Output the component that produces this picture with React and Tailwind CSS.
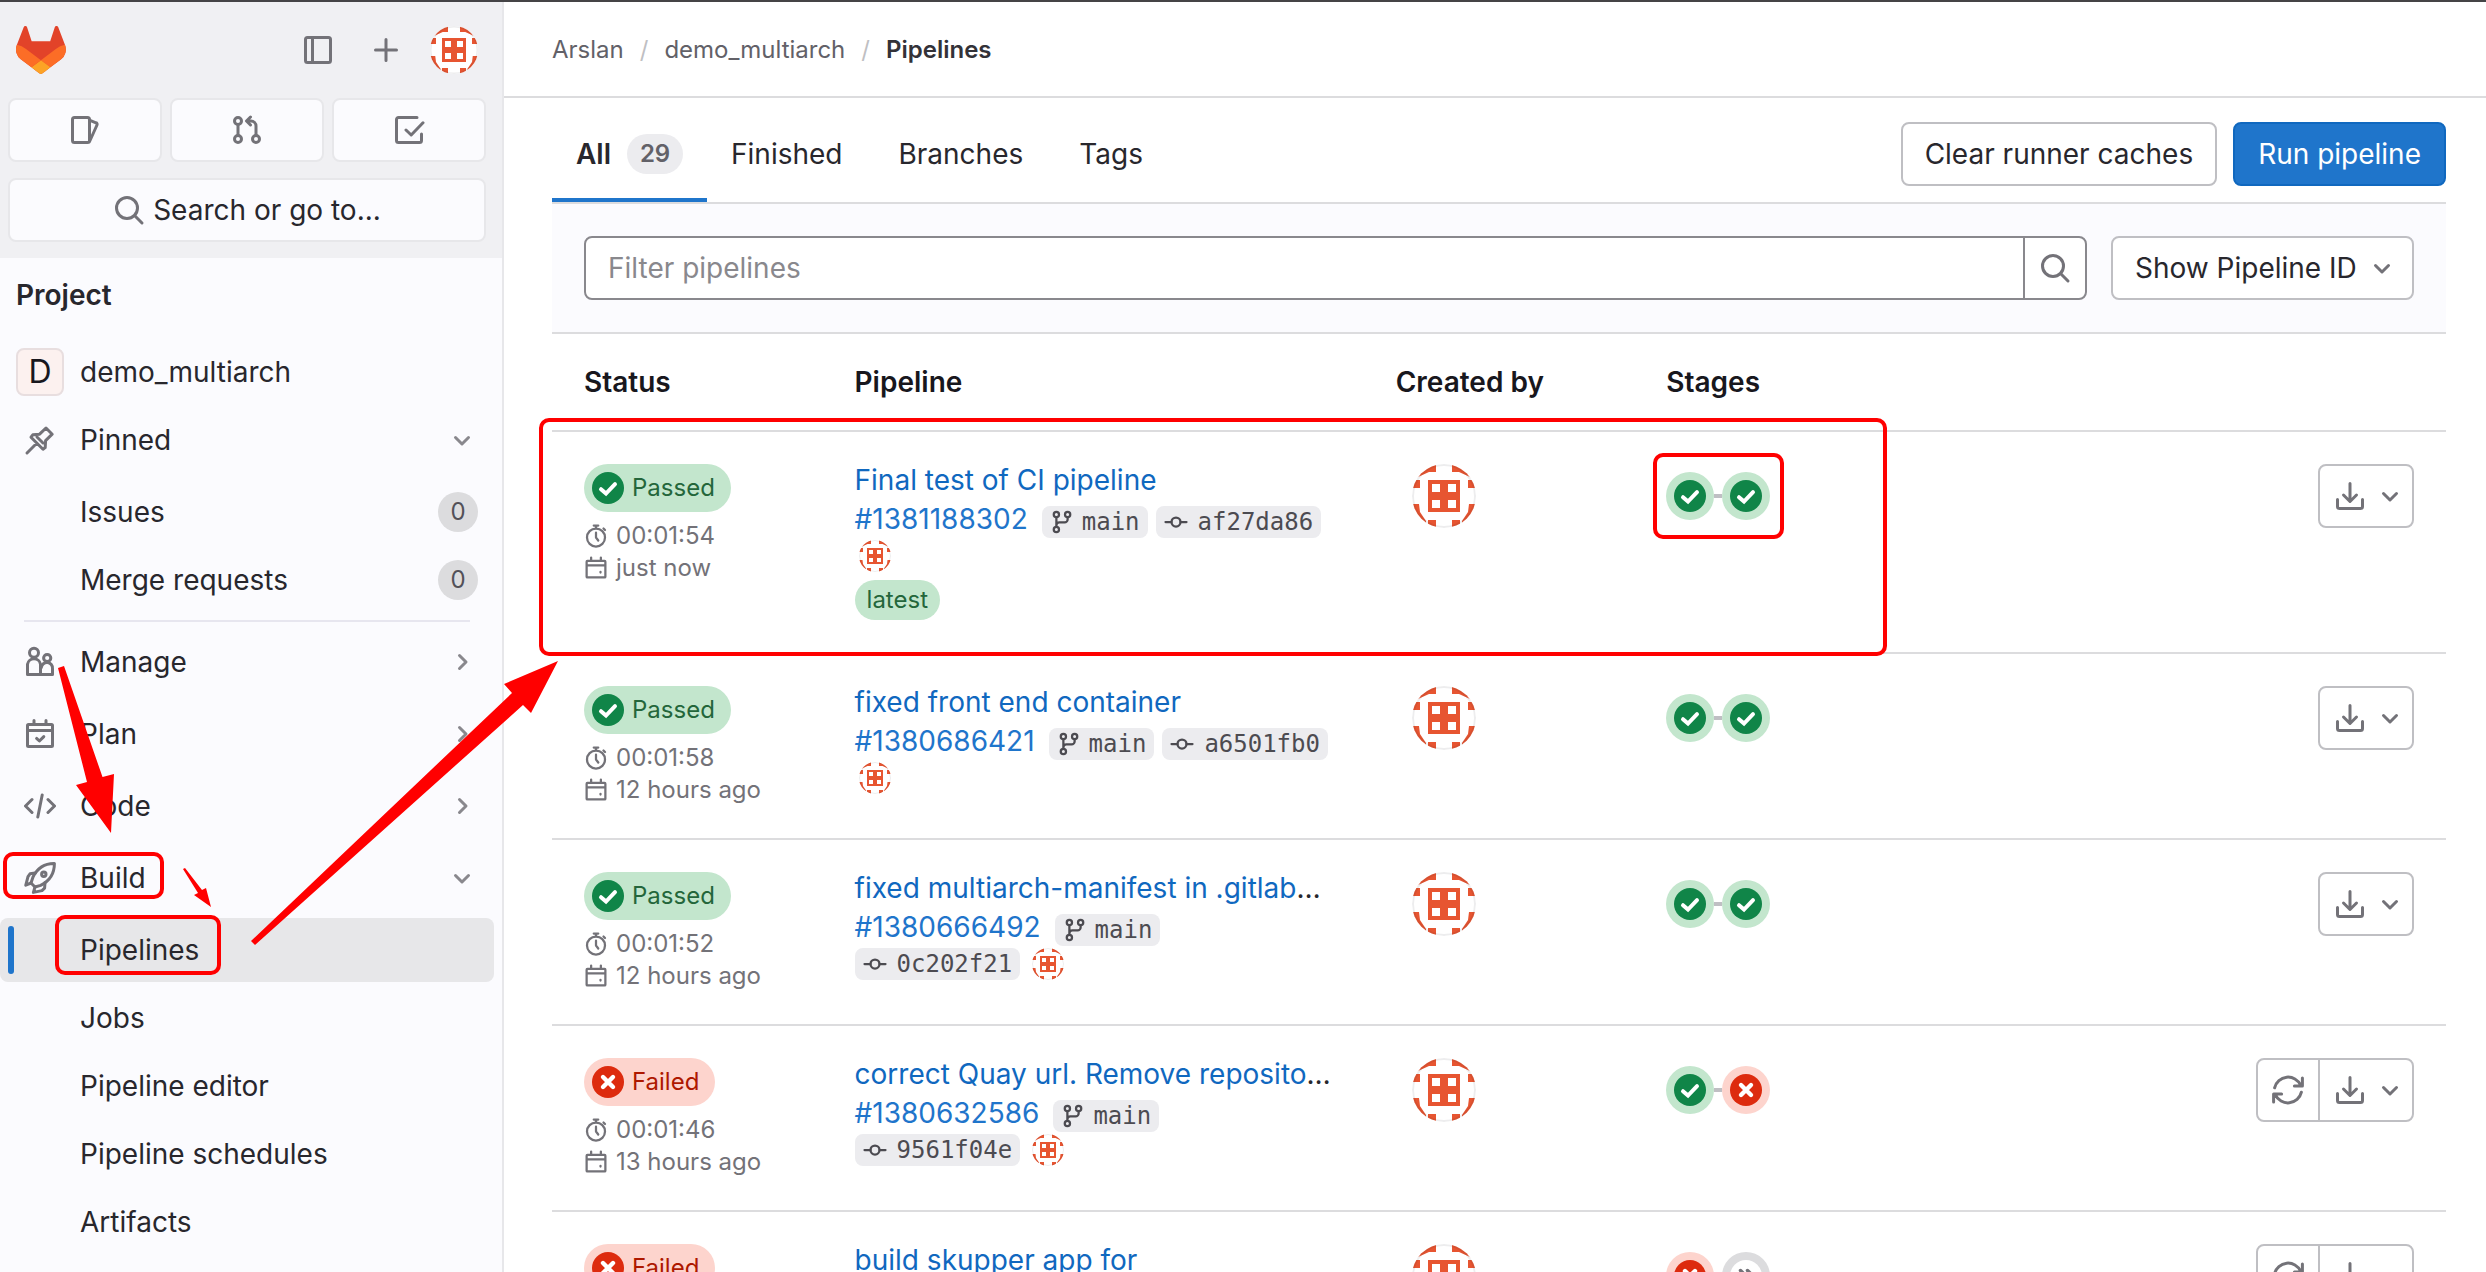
import React, { useState } from 'react';

const Icon = ({ size = 'size-8', children, className = '' }) => (
  <svg
    viewBox="0 0 16 16"
    fill="none"
    stroke="currentColor"
    strokeWidth="1.5"
    strokeLinecap="round"
    strokeLinejoin="round"
    aria-hidden="true"
    className={`shrink-0 ${size} ${className}`}
  >
    {children}
  </svg>
);

const SearchIcon = () => (
  <Icon className="text-[#737278]">
    <circle cx="7" cy="7" r="5.25" />
    <path d="m10.9 10.9 3.6 3.6" />
  </Icon>
);

const ChevronDown = ({ className = 'text-[#737278]' }) => (
  <Icon className={className}>
    <path d="M4.75 6.75 8 10l3.25-3.25" />
  </Icon>
);

const ChevronRight = () => (
  <Icon className="text-[#89888d]">
    <path d="M6.75 4.75 10 8l-3.25 3.25" />
  </Icon>
);

const PinIcon = () => (
  <Icon className="text-[#737278]">
    <path d="m11 2 3.1 3.1-3.3 3.2-.2 3.5-1.1.8-6-6 .9-1.2 3.4-.3L11 2ZM6.5 9.5l-5 5M6.5 6.5l3 3" />
  </Icon>
);

const ManageIcon = () => (
  <Icon className="text-[#737278]">
    <circle cx="5" cy="3.4" r="2.25" />
    <path d="M1.75 14.25V9.1a3.3 3.3 0 0 1 6.5 0v5.15h-6.5Z" />
    <circle cx="11.6" cy="6" r="1.8" />
    <path d="M8.6 14.25h5.65v-2.9a2.7 2.7 0 0 0-5.6-.6" />
  </Icon>
);

const PlanIcon = () => (
  <Icon className="text-[#737278]">
    <path d="M2.25 3.25h11.5a.5.5 0 0 1 .5.5v10a.5.5 0 0 1-.5.5H2.25a.5.5 0 0 1-.5-.5v-10a.5.5 0 0 1 .5-.5ZM2 6.25h12M5 1.25v2M11 1.25v2M6.3 10.2l1.4 1.3 2.2-2.2" />
  </Icon>
);

const CodeIcon = () => (
  <Icon className="text-[#737278]">
    <path d="M4 4.75.75 8 4 11.25M12 4.75 15.25 8 12 11.25M9.1 2.5 6.9 13.5" />
  </Icon>
);

const BuildIcon = () => (
  <Icon className="text-[#737278]">
    <path d="M15.2.8c-4.7-.1-8.3 2-10.7 6.7l-1 3 2 2 2.8-.8C12.7 9.6 15.2 6 15.2.8Z" />
    <path d="M5.6 5.5 3 5.9 2 7.3.9 11.6l2.6-1.1M10.5 10.4l-.2 2.7L9 14.3l-4.3.9.8-2.7" />
    <circle cx="9.9" cy="6.1" r="1.1" />
  </Icon>
);

const ClockIcon = () => (
  <Icon size="size-6">
    <circle cx="8" cy="9" r="6" />
    <path d="M8 5.75V9l1.5 2M8 1v1.5M6.5 1h3M13 3l1 1" />
  </Icon>
);

const CalendarIcon = () => (
  <Icon size="size-6">
    <path d="M2.25 3.25h11.5a.5.5 0 0 1 .5.5v10a.5.5 0 0 1-.5.5H2.25a.5.5 0 0 1-.5-.5v-10a.5.5 0 0 1 .5-.5ZM2 6.25h12M4.75 1v2M11.25 1v2M11 10.5v.5" />
  </Icon>
);

const BranchIcon = () => (
  <Icon size="size-6">
    <circle cx="4.25" cy="3" r="1.75" />
    <circle cx="11.75" cy="3" r="1.75" />
    <circle cx="4.25" cy="13" r="1.75" />
    <path d="M4.25 5v6M11.75 5v1.25a2 2 0 0 1-2 2h-3.5a2 2 0 0 0-2 2" />
  </Icon>
);

const CommitIcon = () => (
  <Icon size="size-6">
    <circle cx="8" cy="8" r="3" />
    <path d="M1 8h4M11 8h4" />
  </Icon>
);

const DownloadIcon = () => (
  <Icon>
    <path d="M1.75 9.75v3.5a1 1 0 0 0 1 1h10.5a1 1 0 0 0 1-1v-3.5M8 1.75v8.75M4.75 7.5 8 10.75l3.25-3.25" />
  </Icon>
);

const RetryIcon = () => (
  <Icon>
    <path d="M1.3 6.9A6.9 6.9 0 0 1 14.3 5.6M15.2 2v4h-4M14.7 9.1A6.9 6.9 0 0 1 1.7 10.4M.8 14v-4h4" />
  </Icon>
);

const Logo = () => (
  <svg viewBox="0 0 25 24" className="h-12 w-[50px]" aria-hidden="true">
    <path d="m24.507 9.5-.034-.09L21.082.562a.896.896 0 0 0-1.694.091l-2.29 7.01H7.825L5.535.653a.898.898 0 0 0-1.694-.09L.451 9.411.416 9.5a6.297 6.297 0 0 0 2.09 7.278l.012.01.03.022 5.16 3.867 2.56 1.935 1.554 1.176a1.051 1.051 0 0 0 1.268 0l1.555-1.176 2.56-1.935 5.197-3.89.014-.01A6.297 6.297 0 0 0 24.507 9.5Z" fill="#E24329" />
    <path d="m24.507 9.5-.034-.09a11.44 11.44 0 0 0-4.56 2.051l-7.447 5.632 4.742 3.584 5.197-3.89.014-.01A6.297 6.297 0 0 0 24.507 9.5Z" fill="#FC6D26" />
    <path d="m7.707 20.677 2.56 1.935 1.555 1.176a1.051 1.051 0 0 0 1.268 0l1.555-1.176 2.56-1.935-4.743-3.584-4.755 3.584Z" fill="#FCA326" />
    <path d="M5.01 11.461a11.43 11.43 0 0 0-4.56-2.05L.416 9.5a6.297 6.297 0 0 0 2.09 7.278l.012.01.03.022 5.16 3.867 4.745-3.584-7.443-5.632Z" fill="#FC6D26" />
  </svg>
);

const Avatar = ({ className = 'size-16' }) => (
  <span className={`block shrink-0 overflow-hidden rounded-full bg-white ${className}`}>
    <svg viewBox="0 0 64 64" className="size-full" role="img" aria-label="Arslan">
      <g fill="#e75531">
        <path d="M0 0h24v8h-7L6 13 0 16ZM64 0H40v8h7l11 5 6 3Z" />
        <path d="M0 16h8v8H0ZM56 16h8v8h-8ZM0 40h7l1 8 6 9v7H0ZM64 40h-7l-1 8-6 9v7h14Z" />
        <path d="M16 56h8v8h-8ZM40 56h8v8h-8Z" />
        <path fillRule="evenodd" d="M16 16h32v32H16ZM20 20v8h8v-8ZM36 20v8h8v-8ZM20 36v8h8v-8ZM36 36v8h8v-8Z" />
      </g>
      <circle cx="32" cy="32" r="31" fill="none" stroke="#1f1e24" strokeOpacity="0.08" strokeWidth="2" />
    </svg>
  </span>
);

const StatusIcon = ({ status }) => {
  if (status === 'passed') {
    return (
      <svg viewBox="0 0 16 16" className="size-8 shrink-0" aria-hidden="true">
        <circle cx="8" cy="8" r="8" fill="#108548" />
        <path d="M4.5 8.6 7 10.8l4.5-4.7" fill="none" stroke="#fff" strokeWidth="2" strokeLinecap="round" />
      </svg>
    );
  }
  if (status === 'failed') {
    return (
      <svg viewBox="0 0 16 16" className="size-8 shrink-0" aria-hidden="true">
        <circle cx="8" cy="8" r="8" fill="#dd2b0e" />
        <path d="m5.5 5.5 5 5M10.5 5.5l-5 5" fill="none" stroke="#fff" strokeWidth="2.2" strokeLinecap="round" />
      </svg>
    );
  }
  return (
    <svg viewBox="0 0 16 16" className="size-8 shrink-0" aria-hidden="true">
      <circle cx="8" cy="8" r="8" fill="#fff" />
      <path d="M5.25 5.25 8 8l-2.75 2.75M8.75 5.25 11.5 8l-2.75 2.75" fill="none" stroke="#737278" strokeWidth="1.75" strokeLinecap="round" strokeLinejoin="round" />
    </svg>
  );
};

const badgeStyles = {
  passed: 'bg-[#c3e6cd] text-[#24663b]',
  failed: 'bg-[#fdd4cd] text-[#ae1800]',
  skipped: 'bg-[#dcdcde] text-[#737278]'
};

const pipelines = [
  {
    status: 'passed', duration: '00:01:54', finished: 'just now',
    title: 'Final test of CI pipeline', id: '#1381188302', branch: 'main', commit: 'af27da86',
    latest: true, stages: ['passed', 'passed']
  },
  {
    status: 'passed', duration: '00:01:58', finished: '12 hours ago',
    title: 'fixed front end container', id: '#1380686421', branch: 'main', commit: 'a6501fb0',
    stages: ['passed', 'passed']
  },
  {
    status: 'passed', duration: '00:01:52', finished: '12 hours ago',
    title: 'fixed multiarch-manifest in .gitlab', cut: true, id: '#1380666492', branch: 'main', commit: '0c202f21',
    stages: ['passed', 'passed']
  },
  {
    status: 'failed', duration: '00:01:46', finished: '13 hours ago',
    title: 'correct Quay url. Remove reposito', cut: true, id: '#1380632586', branch: 'main', commit: '9561f04e',
    stages: ['passed', 'failed'], retry: true
  },
  {
    status: 'failed', title: 'build skupper app for', stages: ['failed', 'skipped'], retry: true
  }
];

const tabs = ['Finished', 'Branches', 'Tags'];
const buildLinks = ['Pipelines', 'Jobs', 'Pipeline editor', 'Pipeline schedules', 'Artifacts'];

const SectionButton = ({ icon, label, open }) => (
  <button type="button" aria-expanded={!!open} className="flex h-16 w-full items-center gap-6 pr-4 pl-6 text-left">
    {icon}
    <span className="grow">{label}</span>
    {open ? <ChevronDown className="text-[#89888d]" /> : <ChevronRight />}
  </button>
);

const Sidebar = () => (
  <aside className="flex w-[504px] shrink-0 flex-col overflow-hidden border-r-2 border-[#e7e7ea] bg-[#fbfbfe]">
    <div className="bg-[#f0f0f3] pr-4 pb-4 pl-2">
      <div className="flex h-24 items-center justify-between pr-2 pl-2">
        <a href="#" aria-label="Homepage"><Logo /></a>
        <div className="flex items-center gap-5 text-[#737278]">
          <button type="button" aria-label="Hide sidebar" className="flex size-12 items-center justify-center">
            <Icon>
              <rect x="1.75" y="1.75" width="12.5" height="12.5" rx="1" />
              <path d="M5.25 2v12" />
            </Icon>
          </button>
          <button type="button" aria-label="Create new" className="flex size-12 items-center justify-center">
            <Icon><path d="M8 2.75v10.5M2.75 8h10.5" /></Icon>
          </button>
          <button type="button" aria-label="User menu"><Avatar className="size-12" /></button>
        </div>
      </div>
      <div className="grid grid-cols-3 gap-2 text-[#737278]">
        <button type="button" aria-label="Issues" className="flex h-16 items-center justify-center rounded-lg border-2 border-[#e7e7ea] bg-[#fbfbfe]">
          <Icon>
            <rect x="1.75" y="1.75" width="8.5" height="12.5" rx="1" />
            <path d="m10.5 3.2 3 1.2a.8.8 0 0 1 .5 1.1l-3.6 8" />
          </Icon>
        </button>
        <button type="button" aria-label="Merge requests" className="flex h-16 items-center justify-center rounded-lg border-2 border-[#e7e7ea] bg-[#fbfbfe]">
          <Icon>
            <circle cx="3.5" cy="3.5" r="1.75" />
            <circle cx="3.5" cy="12.5" r="1.75" />
            <circle cx="12.5" cy="12.5" r="1.75" />
            <path d="M3.5 5.5v5M12.5 10.5V6A2.5 2.5 0 0 0 10 3.5H8.5M9.75 1.5l-2 2 2 2" />
          </Icon>
        </button>
        <button type="button" aria-label="To-Do List" className="flex h-16 items-center justify-center rounded-lg border-2 border-[#e7e7ea] bg-[#fbfbfe]">
          <Icon>
            <path d="M12 1.75H2.75a1 1 0 0 0-1 1v10.5a1 1 0 0 0 1 1h10.5a1 1 0 0 0 1-1V10M6.5 8l2.6 2.5L15 4.4" />
          </Icon>
        </button>
      </div>
      <button type="button" className="mt-4 flex h-16 w-full items-center justify-center gap-2 rounded-lg border-2 border-[#e7e7ea] bg-[#fbfbfe]">
        <SearchIcon />
        Search or go to...
      </button>
    </div>

    <nav aria-label="Project navigation" className="pr-2">
      <h2 className="mb-2 flex h-[74px] items-center pl-4 font-semibold">Project</h2>
      <a href="#" className="mb-1 flex h-16 items-center gap-4 pl-4">
        <span className="flex size-12 items-center justify-center rounded-lg border-2 border-[#e8dedf] bg-[#fcf1ef] text-[32px] text-[#18171d]">D</span>
        demo_multiarch
      </a>
      <SectionButton icon={<PinIcon />} label="Pinned" open />
      <ul className="mt-2 space-y-1">
        {['Issues', 'Merge requests'].map(label => (
          <li key={label}>
            <a href="#" className="flex h-16 items-center justify-between pr-4 pl-20">
              {label}
              <span className="flex size-10 items-center justify-center rounded-full bg-[#dcdcde] text-[24px] text-[#535158]">0</span>
            </a>
          </li>
        ))}
      </ul>
      <hr className="mx-6 my-2 border-t-2 border-[#e7e6ef]" />
      <div className="space-y-2">
        <SectionButton icon={<ManageIcon />} label="Manage" />
        <SectionButton icon={<PlanIcon />} label="Plan" />
        <SectionButton icon={<CodeIcon />} label="Code" />
        <SectionButton icon={<BuildIcon />} label="Build" open />
        <ul className="space-y-1">
          {buildLinks.map((label, index) => (
            <li key={label}>
              <a
                href="#"
                aria-current={index === 0 ? 'page' : undefined}
                className={`relative flex h-16 items-center rounded-lg pl-20 ${index === 0 ? 'bg-[#e7e7e9]' : ''}`}
              >
                {index === 0 && <span className="absolute top-2 bottom-2 left-2 w-1.5 rounded-full bg-[#1f75cb]" />}
                {label}
              </a>
            </li>
          ))}
        </ul>
      </div>
    </nav>
  </aside>
);

const PipelineRow = ({ pipeline }) => (
  <tr className="align-top">
    <td className="border-b-2 border-[#dcdcde] p-8">
      <a href="#" className={`flex h-12 w-fit items-center gap-2 rounded-full pr-4 pl-2 text-[24px] ${badgeStyles[pipeline.status]}`}>
        <StatusIcon status={pipeline.status} />
        {pipeline.status === 'passed' ? 'Passed' : 'Failed'}
      </a>
      {pipeline.duration && (
        <div className="mt-2 text-[24px] leading-8 whitespace-nowrap text-[#737278]">
          <p className="flex items-center gap-2"><ClockIcon />{pipeline.duration}</p>
          <p className="flex items-center gap-2"><CalendarIcon />{pipeline.finished}</p>
        </div>
      )}
    </td>
    <td className="border-b-2 border-[#dcdcde] p-8">
      <p className="mb-1 leading-8 whitespace-nowrap">
        <a href="#" className="text-[#1068bf]">{pipeline.title}</a>
        {pipeline.cut && '…'}
      </p>
      {pipeline.id && (
        <div className="flex flex-wrap items-end gap-x-2 gap-y-0.5">
          <a href="#" className="mr-1.5 leading-[38px] text-[#1f75cb]">{pipeline.id}</a>
          <a href="#" className="flex h-8 items-center gap-2 rounded-lg bg-[#ececef] px-2 font-['DejaVu_Sans_Mono',monospace] text-[24px] text-[#4c4b51]">
            <BranchIcon />{pipeline.branch}
          </a>
          <a href="#" className="flex h-8 items-center gap-2.5 rounded-lg bg-[#ececef] px-2 font-['DejaVu_Sans_Mono',monospace] text-[24px] text-[#4c4b51]">
            <CommitIcon />{pipeline.commit}
          </a>
          <Avatar className="ml-1 size-8" />
        </div>
      )}
      {pipeline.latest && (
        <span className="mt-2 flex h-10 w-fit items-center rounded-full bg-[#c3e6cd] px-3 text-[24px] text-[#24663b]">latest</span>
      )}
    </td>
    <td className="border-b-2 border-[#dcdcde] p-8">
      <a href="#" className="ml-4 block w-fit"><Avatar /></a>
    </td>
    <td className="border-b-2 border-[#dcdcde] p-8">
      <div className="flex h-16 items-center">
        {pipeline.stages.map((stage, index) => (
          <React.Fragment key={index}>
            {index > 0 && <span className="h-1 w-2 bg-[#bfbfc3]" />}
            <button type="button" aria-label={`Stage ${stage}`} className={`flex size-12 items-center justify-center rounded-full ${badgeStyles[stage]}`}>
              <StatusIcon status={stage} />
            </button>
          </React.Fragment>
        ))}
      </div>
    </td>
    <td className="border-b-2 border-[#dcdcde] p-8">
      <div className="flex justify-end text-[#737278]">
        {pipeline.retry && (
          <button type="button" aria-label="Retry" className="-mr-0.5 flex h-16 w-16 items-center justify-center rounded-l-lg border-2 border-[#bfbfc3]">
            <RetryIcon />
          </button>
        )}
        <button
          type="button"
          aria-label="Download artifacts"
          className={`flex h-16 w-24 items-center justify-center gap-2 border-2 border-[#bfbfc3] pl-2 ${pipeline.retry ? 'rounded-r-lg' : 'rounded-lg'}`}
        >
          <DownloadIcon />
          <ChevronDown />
        </button>
      </div>
    </td>
  </tr>
);

// Red callouts leading from the Build menu to the newest pipeline
const Callouts = () => (
  <svg className="size-full" aria-hidden="true">
    <g fill="none" stroke="#ff0000" strokeWidth="4">
      <rect x="5" y="854" width="157" height="43" rx="8" />
      <rect x="57" y="917" width="162" height="56" rx="8" />
      <rect x="541" y="420" width="1344" height="234" rx="8" />
      <rect x="1655" y="455" width="127" height="82" rx="8" />
    </g>
    <g fill="#ff0000">
      <path d="M58 668 64 666 102.5 777 114 774 111 833 76 785 87 782Z" />
      <path d="M251 941 255 945 523 705 531 713 558 661 504 684 512 693Z" />
      <path d="M183 869 185 868 202 890 206 888 211 907 194 895 198 893Z" />
    </g>
  </svg>
);

const App = () => {
  const [filter, setFilter] = useState('');

  return (
    <div className="relative flex h-screen overflow-hidden border-t-2 border-[#454446] bg-white font-[Inter,sans-serif] text-[28px] leading-9 text-[#28272d]">
      <Sidebar />

      <div className="min-w-0 grow">
        <nav aria-label="Breadcrumb" className="flex h-24 items-center border-b-2 border-[#dcdcde] px-12 pt-0.5 text-[24px] text-[#626168]">
          <ol className="flex items-center gap-4">
            <li><a href="#">Arslan</a></li>
            <li aria-hidden="true" className="text-[#bfbfc3]">/</li>
            <li><a href="#">demo_multiarch</a></li>
            <li aria-hidden="true" className="text-[#bfbfc3]">/</li>
            <li><a href="#" aria-current="page" className="font-semibold text-[#333238]">Pipelines</a></li>
          </ol>
        </nav>

        <main className="pr-10 pl-12">
          <div className="flex h-[106px] items-stretch border-b-2 border-[#dcdcde] pt-2">
            <div role="tablist" className="flex grow">
              <button type="button" role="tab" aria-selected="true" className="flex items-center gap-4 border-b-4 border-[#1f75cb] px-6 pt-1 font-semibold">
                All
                <span className="flex h-10 w-14 items-center justify-center rounded-full bg-[#ececef] text-[24px] text-[#626168]">29</span>
              </button>
              {tabs.map(tab => (
                <button key={tab} type="button" role="tab" aria-selected="false" className="mr-2 px-6">
                  {tab}
                </button>
              ))}
            </div>
            <div className="flex items-center gap-4">
              <button type="button" className="h-16 rounded-lg border-2 border-[#bfbfc3] px-[22px]">Clear runner caches</button>
              <button type="button" className="h-16 rounded-lg border-2 border-[#1068bf] bg-[#1f75cb] px-[23px] text-white">Run pipeline</button>
            </div>
          </div>

          <div className="flex gap-6 border-b-2 border-[#dcdcde] bg-[#fbfbfe] p-8">
            <form className="flex h-16 grow rounded-lg border-2 border-[#89888d] bg-white" onSubmit={(e) => e.preventDefault()}>
              <input
                type="text"
                aria-label="Filter pipelines"
                placeholder="Filter pipelines"
                value={filter}
                onChange={(e) => setFilter(e.target.value)}
                className="min-w-0 grow rounded-lg px-[22px] outline-none placeholder:text-[#89888d]"
              />
              <button type="submit" aria-label="Search" className="flex w-[62px] items-center justify-center border-l-2 border-[#89888d]">
                <SearchIcon />
              </button>
            </form>
            <div className="relative">
              <select aria-label="Pipeline identifier" className="h-16 w-[303px] appearance-none rounded-lg border-2 border-[#bfbfc3] bg-white pl-[22px]">
                <option>Show Pipeline ID</option>
                <option>Show Pipeline IID</option>
              </select>
              <span className="pointer-events-none absolute top-4 right-4"><ChevronDown /></span>
            </div>
          </div>

          <table className="w-full table-fixed border-separate border-spacing-0 text-left">
            <thead>
              <tr className="h-[98px] text-[#18171d]">
                <th className="w-1/7 border-b-2 border-[#dcdcde] px-8 font-semibold">Status</th>
                <th className="w-2/7 border-b-2 border-[#dcdcde] px-8 font-semibold">Pipeline</th>
                <th className="w-1/7 border-b-2 border-[#dcdcde] px-8 font-semibold">Created by</th>
                <th className="w-1/7 border-b-2 border-[#dcdcde] px-8 font-semibold">Stages</th>
                <th className="w-2/7 border-b-2 border-[#dcdcde] px-8" aria-label="Actions" />
              </tr>
            </thead>
            <tbody>
              {pipelines.map((pipeline, index) => (
                <PipelineRow key={index} pipeline={pipeline} />
              ))}
            </tbody>
          </table>
        </main>
      </div>

      <div className="pointer-events-none absolute -top-0.5 bottom-0 left-0 w-full">
        <Callouts />
      </div>
    </div>
  );
};

export default App;
